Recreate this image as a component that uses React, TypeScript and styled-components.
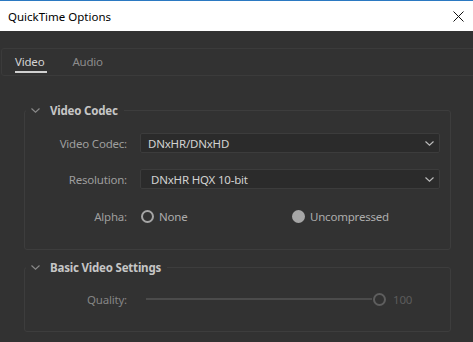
import React from 'react'
import styled, { createGlobalStyle } from 'styled-components'

const GlobalStyle = createGlobalStyle`
  html, body {
    margin: 0;
    padding: 0;
    background: #323232;
  }
  body {
    font-family: 'Noto Sans', 'Open Sans', sans-serif;
    font-size: 11.5px;
  }
`

const Window = styled.div`
  width: 473px;
  height: 342px;
  overflow: hidden;
  background: #323232;
  display: flex;
  flex-direction: column;
`

const TitleBar = styled.div`
  height: 30px;
  flex: none;
  background: #ffffff;
  border-top: 1px solid #2b79c2;
  display: flex;
  align-items: center;
  justify-content: space-between;
  padding: 0 8px 0 8px;
  color: #000;
  font-size: 11.5px;
`

const CloseButton = styled.button`
  border: none;
  background: none;
  padding: 0;
  width: 12px;
  height: 12px;
  display: flex;
  align-items: center;
  justify-content: center;
  margin-right: 1px;
`

const Panel = styled.div`
  letter-spacing: -0.2px;
`

const Body = styled.div`
  padding: 17px 0 0 1px;
`

const TabStrip = styled.div`
  height: 26px;
  border: 1px solid #3b3b3b;
  border-radius: 3px;
  margin-right: -6px;
  display: flex;
  align-items: stretch;
  padding-left: 13px;
  gap: 28px;
`

const Tab = styled.div<{ $active?: boolean }>`
  position: relative;
  display: flex;
  align-items: center;
  padding-bottom: 2px;
  color: ${(p) => (p.$active ? '#d4d4d4' : '#8c8c8c')};

  &::after {
    content: '';
    display: ${(p) => (p.$active ? 'block' : 'none')};
    position: absolute;
    left: 0;
    right: -3px;
    bottom: 2px;
    height: 2px;
    background: #d0d0d0;
  }
`

const Group = styled.fieldset<{ $top: number }>`
  margin: ${(p) => p.$top}px 22px 0 24px;
  padding: 0 10px 0 0;
  border: 1px solid #3d3d3d;
  border-radius: 3px;
  min-width: 0;
`

const Legend = styled.legend`
  height: 16px;
  padding: 0 6px 0 5px;
  margin-left: 1px;
  display: flex;
  align-items: center;
  gap: 10px;
  color: #c6c6c6;
  font-weight: 700;
`

const Rows = styled.div<{ $pt: number; $pb: number }>`
  display: flex;
  flex-direction: column;
  gap: 16px;
  padding: ${(p) => p.$pt}px 0 ${(p) => p.$pb}px 0;
`

const Row = styled.div<{ $shift?: number }>`
  display: grid;
  grid-template-columns: 102px 1fr;
  column-gap: 13px;
  align-items: center;
  height: 20px;
  margin-top: ${(p) => p.$shift ?? 0}px;
`

const Label = styled.span<{ $dim?: boolean }>`
  text-align: right;
  color: ${(p) => (p.$dim ? '#858585' : '#9e9e9e')};
`

const Select = styled.div<{ $inset: number }>`
  height: 18px;
  border: 1px solid #3c3c3c;
  border-radius: 2px;
  background: #2b2b2b;
  display: flex;
  align-items: center;
  justify-content: space-between;
  padding: 0 5px 0 ${(p) => p.$inset}px;
  color: #d2d2d2;
`

const Options = styled.div`
  display: flex;
  align-items: center;
  padding-left: 1px;
`

const Option = styled.label<{ $width?: number }>`
  display: flex;
  align-items: center;
  gap: 5px;
  width: ${(p) => (p.$width ? `${p.$width}px` : 'auto')};
  color: #adadad;
`

const Radio = styled.span<{ $checked?: boolean }>`
  width: 13px;
  height: 13px;
  box-sizing: border-box;
  border-radius: 50%;
  border: 2px solid #a6a6a6;
  background: ${(p) => (p.$checked ? '#a6a6a6' : 'transparent')};
`

const Slider = styled.div`
  display: flex;
  align-items: center;
  padding-left: 6px;
`

const Track = styled.div`
  flex: 1;
  height: 2px;
  background: #4b4b4b;
`

const Thumb = styled.span`
  width: 13px;
  height: 13px;
  box-sizing: border-box;
  border-radius: 50%;
  border: 2px solid #5e5e5e;
  background: #323232;
  margin-left: 1px;
`

const Value = styled.span`
  width: 54px;
  padding-left: 7px;
  box-sizing: border-box;
  color: #5c5c5c;
`

const Chevron = ({ color }: { color: string }) => (
  <svg width='9' height='5' viewBox='0 0 9 5' fill='none'>
    <path d='M0.5 0.5 L4.5 4.2 L8.5 0.5' stroke={color} strokeWidth='1.1' />
  </svg>
)

const Dropdown = ({ value, inset }: { value: string; inset: number }) => (
  <Select $inset={inset}>
    <span>{value}</span>
    <Chevron color='#bdbdbd' />
  </Select>
)

export default function App() {
  return (
    <Window>
      <GlobalStyle />
      <TitleBar>
        <span>QuickTime Options</span>
        <CloseButton aria-label='Close'>
          <svg width='11' height='11' viewBox='0 0 11 11'>
            <path d='M0.5 0.5 L10.5 10.5 M10.5 0.5 L0.5 10.5' stroke='#111' strokeWidth='1' />
          </svg>
        </CloseButton>
      </TitleBar>
      <Panel>
        <Body>
          <TabStrip>
            <Tab $active>Video</Tab>
            <Tab>Audio</Tab>
          </TabStrip>
        </Body>

        <Group $top={26}>
          <Legend>
            <Chevron color='#8a8a8a' />
            Video Codec
          </Legend>
          <Rows $pt={15} $pb={23}>
            <Row>
              <Label>Video Codec:</Label>
              <Dropdown value='DNxHR/DNxHD' inset={7} />
            </Row>
            <Row>
              <Label>Resolution:</Label>
              <Dropdown value='DNxHR HQX 10-bit' inset={10} />
            </Row>
            <Row $shift={1}>
              <Label>Alpha:</Label>
              <Options>
                <Option $width={151}>
                  <Radio />
                  None
                </Option>
                <Option>
                  <Radio $checked />
                  Uncompressed
                </Option>
              </Options>
            </Row>
          </Rows>
        </Group>

        <Group $top={9}>
          <Legend>
            <Chevron color='#8a8a8a' />
            Basic Video Settings
          </Legend>
          <Rows $pt={14} $pb={22}>
            <Row>
              <Label $dim>Quality:</Label>
              <Slider>
                <Track />
                <Thumb />
                <Value>100</Value>
              </Slider>
            </Row>
          </Rows>
        </Group>
      </Panel>
    </Window>
  )
}
